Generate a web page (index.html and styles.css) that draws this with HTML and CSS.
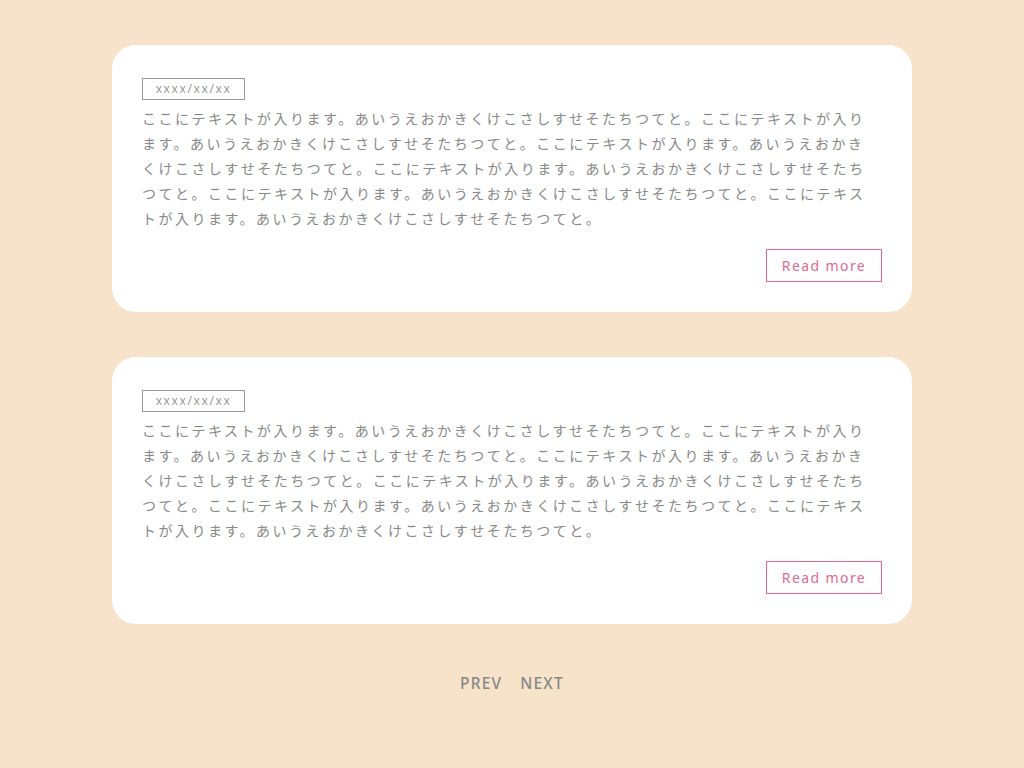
FILE: index.html
```html
<!DOCTYPE html>
<html lang="ja">

<head>
  <meta charset="UTF-8">
  <title>News</title>
  <link rel="stylesheet" href="styles.css">
</head>

<body>

  <main class="news">
    <article class="card">
      <p class="card-date">xxxx/xx/xx</p>
      <p class="card-text">ここにテキストが入ります。あいうえおかきくけこさしすせそたちつてと。ここにテキストが入ります。あいうえおかきくけこさしすせそたちつてと。ここにテキストが入ります。あいうえおかきくけこさしすせそたちつてと。ここにテキストが入ります。あいうえおかきくけこさしすせそたちつてと。ここにテキストが入ります。あいうえおかきくけこさしすせそたちつてと。ここにテキストが入ります。あいうえおかきくけこさしすせそたちつてと。</p>
      <div class="card-foot">
        <a class="more" href="#">Read more</a>
      </div>
    </article>

    <article class="card">
      <p class="card-date">xxxx/xx/xx</p>
      <p class="card-text">ここにテキストが入ります。あいうえおかきくけこさしすせそたちつてと。ここにテキストが入ります。あいうえおかきくけこさしすせそたちつてと。ここにテキストが入ります。あいうえおかきくけこさしすせそたちつてと。ここにテキストが入ります。あいうえおかきくけこさしすせそたちつてと。ここにテキストが入ります。あいうえおかきくけこさしすせそたちつてと。ここにテキストが入ります。あいうえおかきくけこさしすせそたちつてと。</p>
      <div class="card-foot">
        <a class="more" href="#">Read more</a>
      </div>
    </article>

    <nav class="pager">
      <a href="#">PREV</a>
      <a href="#">NEXT</a>
    </nav>
  </main>

</body>

</html>
```

FILE: styles.css
```css
body {
  margin: 0;
  background-color: #f6e3ca;
  font-family: "Noto Sans CJK JP", "Noto Sans", sans-serif;
  color: #888;
}

.news {
  width: 800px;
  margin: 0 auto;
  padding-top: 45px;
}

.card {
  background-color: #fff;
  border-radius: 24px;
  padding: 33px 30px 30px;
  margin-bottom: 45px;
}

.card-date {
  margin: 0;
  width: 101px;
  height: 20px;
  border: 1px solid #999;
  font-family: "Noto Sans", sans-serif;
  font-size: 12px;
  line-height: 20px;
  letter-spacing: 1.6px;
  text-align: center;
  color: #999;
}

.card-text {
  margin: 6px 10px 0 0;
  font-size: 14px;
  line-height: 25px;
  letter-spacing: 2.5px;
}

.card-foot {
  display: flex;
  justify-content: flex-end;
  margin-top: 18px;
}

.more {
  display: block;
  width: 114px;
  height: 31px;
  border: 1px solid #e0698f;
  color: #e0698f;
  font-family: "Noto Sans", sans-serif;
  font-size: 14px;
  line-height: 31px;
  letter-spacing: 1.4px;
  text-align: center;
  text-decoration: none;
}

.pager {
  display: flex;
  justify-content: center;
  gap: 18px;
  margin-top: 49px;
}

.pager a {
  font-family: "Noto Sans", sans-serif;
  font-size: 15.5px;
  font-weight: 500;
  letter-spacing: 1.2px;
  color: #888;
  text-decoration: none;
  line-height: 20px;
}
```
